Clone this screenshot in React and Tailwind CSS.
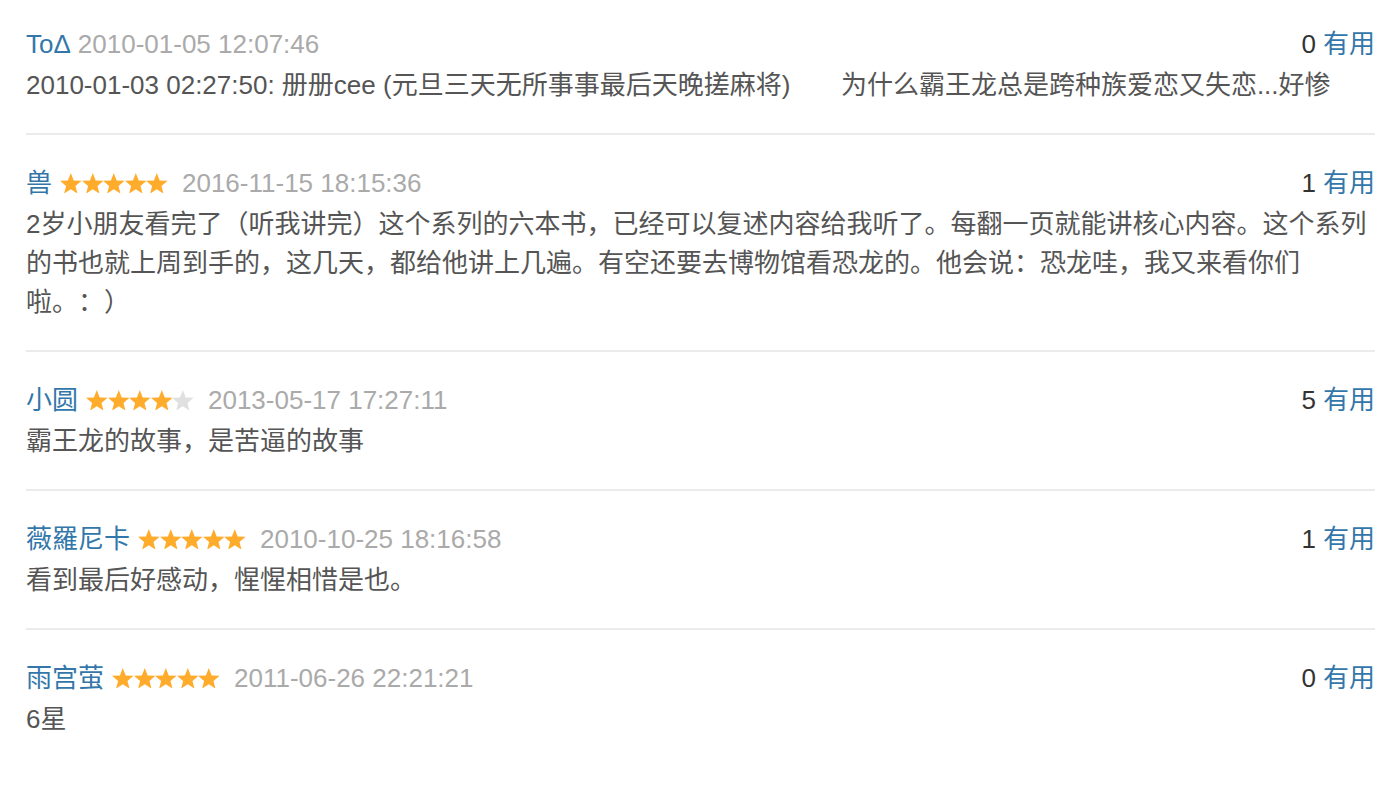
import React from "react"

const comments = [
    {
        name: "ToΔ",
        rating: 0,
        time: "2010-01-05 12:07:46",
        votes: 0,
        text: "2010-01-03 02:27:50: 册册cee (元旦三天无所事事最后天晚搓麻将)\u00a0\u00a0\u00a0\u00a0\u00a0\u00a0\u00a0为什么霸王龙总是跨种族爱恋又失恋...好惨",
    },
    {
        name: "兽",
        rating: 5,
        time: "2016-11-15 18:15:36",
        votes: 1,
        text: "2岁小朋友看完了（听我讲完）这个系列的六本书，已经可以复述内容给我听了。每翻一页就能讲核心内容。这个系列的书也就上周到手的，这几天，都给他讲上几遍。有空还要去博物馆看恐龙的。他会说：恐龙哇，我又来看你们啦。：）",
    },
    {
        name: "小圆",
        rating: 4,
        time: "2013-05-17 17:27:11",
        votes: 5,
        text: "霸王龙的故事，是苦逼的故事",
    },
    {
        name: "薇羅尼卡",
        rating: 5,
        time: "2010-10-25 18:16:58",
        votes: 1,
        text: "看到最后好感动，惺惺相惜是也。",
    },
    {
        name: "雨宫萤",
        rating: 5,
        time: "2011-06-26 22:21:21",
        votes: 0,
        text: "6星",
    },
]

function Star({ filled }) {
    return (
        <svg width="21.6" height="20.6" viewBox="0 0 22.8 21.7" className="block">
            <polygon
                points="11.4,0 14.46,7.79 22.8,8.29 16.35,13.61 18.45,21.7 11.4,17.2 4.35,21.7 6.45,13.61 0,8.29 8.34,7.79"
                fill={filled ? "#ffac2d" : "#e0e0e0"}
            />
        </svg>
    )
}

function Stars({ rating }) {
    return (
        <span className="flex items-center ml-[8px] mr-[7px]">
            {[1, 2, 3, 4, 5].map((i) => (
                <Star key={i} filled={i <= rating} />
            ))}
        </span>
    )
}

function CommentItem({ item, first }) {
    return (
        <div className={`${first ? "pt-[25px]" : "pt-[29px] border-t-2 border-[#ebebeb]"} pb-[28px]`}>
            <div className="flex items-center justify-between h-[38px]">
                <div className="flex items-center">
                    <span className="text-[#3377aa]">{item.name}</span>
                    {item.rating > 0 ? <Stars rating={item.rating} /> : null}
                    <span className="text-[#aaaaaa] ml-[7px]">{item.time}</span>
                </div>
                <div>
                    <span className="text-[#333333]">{item.votes}</span>
                    <span className="text-[#3377aa] ml-[7px]">有用</span>
                </div>
            </div>
            <p className="mt-[3px] text-[#555555] leading-[39px] [text-spacing-trim:space-all]">{item.text}</p>
        </div>
    )
}

export default function App() {
    return (
        <div
            className="bg-white min-h-screen pl-[26px] pr-[5px] text-[26px]"
            style={{ fontFamily: '"Liberation Sans", "Noto Sans CJK SC", sans-serif' }}
        >
            {comments.map((item, i) => (
                <CommentItem key={i} item={item} first={i === 0} />
            ))}
        </div>
    )
}
